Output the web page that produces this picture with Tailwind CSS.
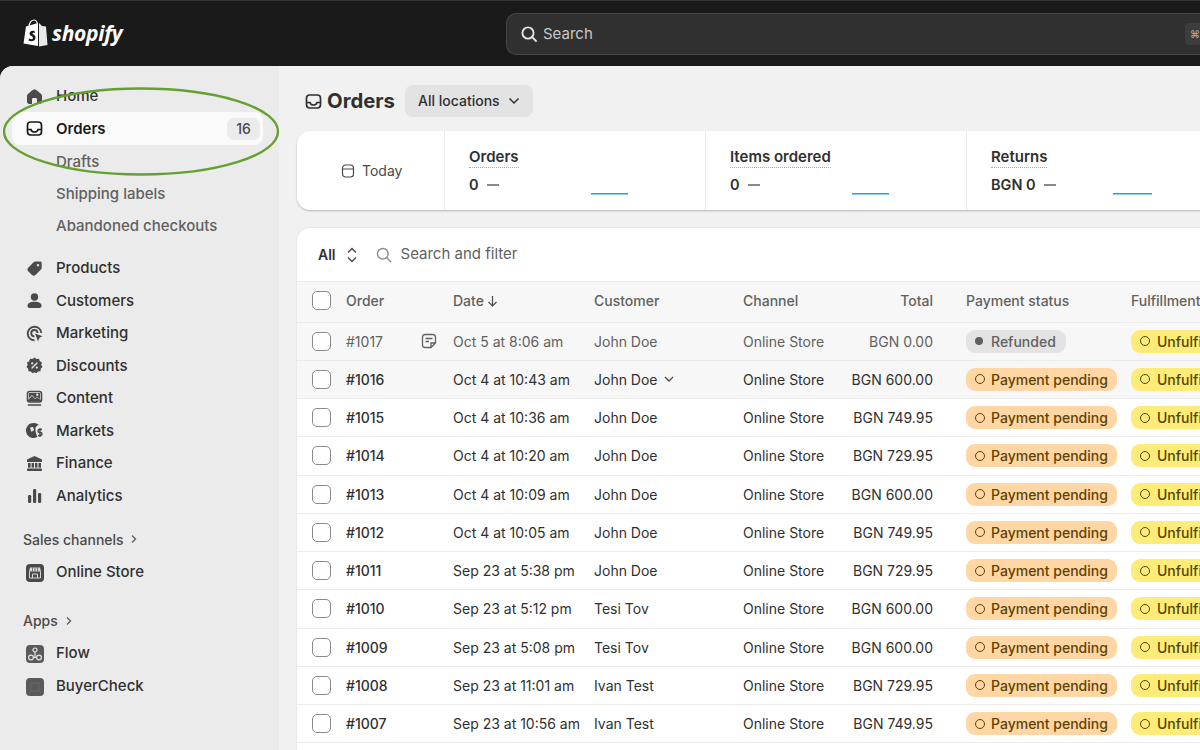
<!DOCTYPE html>
<html><head><meta charset="utf-8">
<script src="https://cdn.jsdelivr.net/npm/@tailwindcss/browser@4"></script>
</head>
<body class="m-0 w-[1200px] h-[750px] overflow-hidden bg-[#1a1a1a] font-['Inter','Liberation_Sans',sans-serif] text-[#303030]">
<header class="h-[66px] flex items-center relative border-t border-[#333]">
  <div class="w-[506px] pl-[23px] flex items-center gap-[4px]">
    <svg width="25" height="29" viewBox="0 0 25 29"><path d="M3 7.5 L15 4 L15 27 L0.5 24.5 Z" fill="#fff"/><path d="M16 4 L19 7 L23 7.5 L24.5 26 L16 27.5 Z" fill="#e8e8e8"/><path d="M6 8 C6 3 9 1 11 1 C13 1 14.5 3 14.5 7" fill="none" stroke="#fff" stroke-width="1.2"/><path d="M11.5 12 C9 11 6.5 12.5 6.5 14.5 C6.5 17 10 17 10 19 C10 20.5 8 20.5 6 19.5 L5.5 21.5 C8 23 12 22.5 12.5 19 C13 16 9.5 15.5 9.5 14.5 C9.5 13.5 11 13.5 12 14 Z" fill="#1a1a1a"/></svg>
    <span class="text-white italic font-bold text-[21px] tracking-[-0.3px] font-['Open_Sans',sans-serif]">shopify</span>
  </div>
  <div class="flex-1 h-[42px] rounded-l-[10px] bg-[#303030] border border-[#454545] border-r-0 flex items-center pl-[13px] gap-[5px] text-[#c9c9c9] text-[15px] overflow-hidden">
    <svg width="18" height="18" viewBox="0 0 18 18" fill="none" stroke="#e3e3e3" stroke-width="1.9"><circle cx="8" cy="8" r="5.6"/><path d="M12.2 12.2 16 16" stroke-linecap="round"/></svg>
    <span class="pt-[2px]">Search</span>
    <div class="ml-auto w-[15px] h-[22px] bg-[#3d3d3d] rounded-l-[4px] text-[10px] text-[#b5b5b5] pl-[5px] leading-[22px] overflow-hidden">⌘</div>
  </div>
</header>
<div class="flex h-[684px] bg-[#f1f1f1] rounded-tl-[13px] overflow-hidden">
  <aside class="w-[279px] shrink-0 bg-[#ebebeb] text-[15px] font-medium relative">
    <nav class="pt-[14px] pl-[12px] pr-[16px]">
      <div class="h-[32px] flex items-center px-[14px] gap-[13px]"><svg width="17" height="17" viewBox="0 0 17 17" fill="#4a4a4a"><path d="M8.5 1.5 C9.5 1.5 10.2 2 11 2.6 L14.5 5.5 C15.5 6.3 16 7 16 8.5 V13.5 C16 15 15 16 13.5 16 H11 V11.5 C11 10.5 10.5 10 9.5 10 H7.5 C6.5 10 6 10.5 6 11.5 V16 H3.5 C2 16 1 15 1 13.5 V8.5 C1 7 1.5 6.3 2.5 5.5 L6 2.6 C6.8 2 7.5 1.5 8.5 1.5 Z"/></svg><span class="pt-[1px]">Home</span></div>
      <div class="h-[33px] flex items-center px-[14px] gap-[13px] bg-[#fafafa] rounded-[8px] font-semibold text-[#1a1a1a]"><svg width="17" height="17" viewBox="0 0 17 17" fill="none" stroke="#1a1a1a" stroke-width="1.7"><rect x="1.5" y="2" width="14" height="13" rx="3.2"/><path d="M1.5 9.5 H5 C5.5 11.5 7 12 8.5 12 C10 12 11.5 11.5 12 9.5 H15.5"/></svg><span class="pt-[1px]">Orders</span><span class="ml-auto -mr-[11px] w-[33px] h-[22px] rounded-[7px] bg-[#ebebeb] text-center leading-[22px] font-medium text-[14px] text-[#4a4a4a]">16</span></div>
      <div class="h-[33px] flex items-center pl-[44px] text-[#616161]"><span class="pt-[1px]">Drafts</span></div>
      <div class="h-[32px] flex items-center pl-[44px] text-[#616161]">Shipping labels</div>
      <div class="h-[33px] flex items-center pl-[44px] text-[#616161]">Abandoned checkouts</div>
      <div class="h-[9px]"></div>
      <div class="h-[32.5px] flex items-center px-[14px] gap-[13px]"><svg width="17" height="17" viewBox="0 0 17 17" fill="#4a4a4a"><path fill-rule="evenodd" d="M9.5 1.5 H14 C15 1.5 15.7 2.2 15.7 3.2 V7.7 C15.7 8.5 15.4 9.1 14.9 9.6 L9.5 15 C8.5 16 7 16 6 15 L2.2 11.2 C1.2 10.2 1.2 8.7 2.2 7.7 L7.6 2.3 C8.1 1.8 8.7 1.5 9.5 1.5 Z M12 4 a1.2 1.2 0 1 0 .01 0 Z"/></svg><span>Products</span></div>
      <div class="h-[32.5px] flex items-center px-[14px] gap-[13px]"><svg width="17" height="17" viewBox="0 0 17 17" fill="#4a4a4a"><circle cx="8.5" cy="5" r="3.7"/><path d="M1.5 14 C1.5 11 4.5 9.7 8.5 9.7 C12.5 9.7 15.5 11 15.5 14 C15.5 15.3 14.7 16 13.5 16 H3.5 C2.3 16 1.5 15.3 1.5 14 Z"/></svg><span>Customers</span></div>
      <div class="h-[32.5px] flex items-center px-[14px] gap-[13px]"><svg width="17" height="17" viewBox="0 0 17 17" fill="none" stroke="#4a4a4a" stroke-width="1.9"><path d="M8.5 15.3 A6.8 6.8 0 1 1 15.3 8"/><path d="M8.5 11.4 A3.2 3.2 0 1 1 11.6 8"/><path d="M9 8.5 L16.5 11.2 L13.5 12.8 L12 16.3 Z" fill="#4a4a4a" stroke="none"/></svg><span>Marketing</span></div>
      <div class="h-[32.5px] flex items-center px-[14px] gap-[13px]"><svg width="17" height="17" viewBox="0 0 17 17"><path d="M8.5 0.5 L10.5 2 L13 1.8 L13.8 4.2 L16 5.5 L15.2 8 L16.5 10 L14.7 11.8 L14.5 14.3 L12 14.5 L10.3 16.3 L8.5 15.3 L6.5 16.3 L4.8 14.5 L2.5 14.3 L2.2 11.8 L0.5 10 L1.7 8 L1 5.5 L3.2 4.2 L4 1.8 L6.5 2 Z" fill="#4a4a4a"/><path d="M6 11 L11 6" stroke="#ebebeb" stroke-width="1.4" stroke-linecap="round"/><circle cx="6.2" cy="6.4" r="1.1" fill="#ebebeb"/><circle cx="10.8" cy="10.6" r="1.1" fill="#ebebeb"/></svg><span>Discounts</span></div>
      <div class="h-[32.5px] flex items-center px-[14px] gap-[13px]"><svg width="17" height="17" viewBox="0 0 17 17"><rect x="1.5" y="1.5" width="14" height="10.5" rx="2.2" fill="none" stroke="#4a4a4a" stroke-width="1.6"/><path d="M2 10 L6 6 L9 9 L11 7.5 L15 10 V11.5 H2 Z" fill="#4a4a4a"/><path d="M3 3 H14 V9 L11 7 L9 8.5 L6 5 L3 8 Z" fill="#4a4a4a"/><circle cx="11.3" cy="4.8" r="1.2" fill="#ebebeb"/><path d="M2.5 15 H14.5" stroke="#4a4a4a" stroke-width="1.7" stroke-linecap="round"/></svg><span>Content</span></div>
      <div class="h-[32.5px] flex items-center px-[14px] gap-[13px]"><svg width="17" height="17" viewBox="0 0 17 17"><path d="M8 1 A7.5 7.5 0 0 1 13 3 C10 3.5 9 6 9.5 8.5 C9.8 11 10.5 13.5 11.5 14.8 A7.5 7.5 0 1 1 8 1 Z" fill="#4a4a4a"/><path d="M4 5.5 L7 5 L8 8 L5.5 10 Z" fill="#ebebeb"/><path d="M16 7.5 H13.5 C11.5 7.5 11.5 10.5 13.5 10.5 H14.5 C16.5 10.5 16.5 13.5 14.5 13.5 H12 M14 6 V15" fill="none" stroke="#4a4a4a" stroke-width="1.4"/></svg><span>Markets</span></div>
      <div class="h-[32.5px] flex items-center px-[14px] gap-[13px]"><svg width="17" height="17" viewBox="0 0 17 17" fill="#4a4a4a"><path d="M8.5 1 L16 4.5 V7 H1 V4.5 Z"/><rect x="2" y="8" width="2.6" height="4.6"/><rect x="5.6" y="8" width="2.4" height="4.6"/><rect x="9" y="8" width="2.4" height="4.6"/><rect x="12.4" y="8" width="2.6" height="4.6"/><rect x="1" y="13.5" width="15" height="2.5" rx=".8"/></svg><span>Finance</span></div>
      <div class="h-[32.5px] flex items-center px-[14px] gap-[13px]"><svg width="17" height="17" viewBox="0 0 17 17" fill="#4a4a4a"><rect x="2" y="8" width="3.2" height="8" rx="1.2"/><rect x="7" y="2" width="3.2" height="14" rx="1.2"/><rect x="12" y="6" width="3.2" height="10" rx="1.2"/></svg><span>Analytics</span></div>
      <div class="h-[11px]"></div>
      <div class="h-[33.5px] pb-[1px] flex items-center pl-[11px] gap-[6px] text-[14px] text-[#4a4a4a]"><span>Sales channels</span><svg width="8" height="10" viewBox="0 0 8 10" fill="none" stroke="#616161" stroke-width="1.4"><path d="M2 1.5 L5.5 5 L2 8.5"/></svg></div>
      <div class="h-[32px] flex items-center px-[14px] gap-[12px]"><svg width="18" height="18" viewBox="0 0 18 18"><rect width="18" height="18" rx="4" fill="#4a4a4a"/><path d="M3.5 7.5 V14 H14.5 V7.5" fill="none" stroke="#d8d8d8" stroke-width="1"/><path d="M4 3.5 H14 L15 7.5 H3 Z" fill="#d8d8d8"/><path d="M6.5 3.5 V7.5 M9 3.5 V7.5 M11.5 3.5 V7.5" stroke="#4a4a4a" stroke-width=".7"/><path d="M6.5 14 V10 H11.5 V14" fill="none" stroke="#d8d8d8" stroke-width="1"/></svg><span>Online Store</span></div>
      <div class="h-[15.5px]"></div>
      <div class="h-[33px] flex items-center pl-[11px] gap-[7px] text-[14px] text-[#4a4a4a]"><span>Apps</span><svg width="8" height="10" viewBox="0 0 8 10" fill="none" stroke="#616161" stroke-width="1.4"><path d="M2 1.5 L5.5 5 L2 8.5"/></svg></div>
      <div class="h-[33px] flex items-center px-[14px] gap-[12px]"><svg width="18" height="18" viewBox="0 0 18 18"><rect width="18" height="18" rx="4" fill="#5a5a5a"/><g fill="none" stroke="#e5e5e5" stroke-width="1.2"><circle cx="9" cy="5" r="2"/><circle cx="5" cy="12.5" r="2.4"/><circle cx="13" cy="12.5" r="2.4"/><path d="M9 7 V12.5 M7.4 12.5 H10.6"/></g></svg><span>Flow</span></div>
      <div class="h-[33px] flex items-center px-[14px] gap-[12px]"><svg width="18" height="18" viewBox="0 0 18 18"><rect width="18" height="18" rx="4" fill="#5a5a5a"/><rect x="5" y="5" width="8" height="8" fill="none" stroke="#666" stroke-width="1"/></svg><span>BuyerCheck</span></div>
    </nav>
    <svg class="absolute left-[3px] top-[21px] pointer-events-none" width="277" height="90" viewBox="0 0 277 90" fill="none"><ellipse cx="138" cy="44.5" rx="137" ry="43" stroke="#64a032" stroke-width="2.4"/></svg>
  </aside>
  <main class="flex-1 min-w-0 pl-[18px] overflow-hidden">
    <div class="h-[65px] flex items-center pl-[8px] pt-[5px]">
      <svg width="17" height="17" viewBox="0 0 17 17" fill="none" stroke="#303030" stroke-width="1.7"><rect x="1.5" y="2" width="14" height="13" rx="3.2"/><path d="M1.5 9.5 H5 C5.5 11.5 7 12 8.5 12 C10 12 11.5 11.5 12 9.5 H15.5"/></svg>
      <h1 class="ml-[5px] text-[20.3px] font-bold">Orders</h1>
      <button class="ml-[10px] h-[32px] w-[128px] flex items-center justify-center gap-[8px] bg-[#e3e3e3] rounded-[8px] text-[14px] font-medium"><span class="pb-[2px]">All locations</span> <svg width="12" height="8" viewBox="0 0 12 8" fill="none" stroke="#303030" stroke-width="1.5"><path d="M1.5 1.5 L6 6 L10.5 1.5"/></svg></button>
    </div>
    <section class="h-[79px] w-[940px] bg-white rounded-l-[13px] flex shadow-[0_1px_2px_rgba(0,0,0,0.25)]">
      <div class="w-[148px] flex items-center pl-[44px] gap-[7px] border-r border-[#ebebeb] text-[14px] text-[#4a4a4a]"><svg width="14" height="14" viewBox="0 0 14 14" fill="none" stroke="#4a4a4a" stroke-width="1.2"><rect x="1.5" y="1" width="11" height="12" rx="3"/><path d="M1.5 5 H12.5"/></svg>Today</div>
      <div class="w-[261px] border-r border-[#ebebeb] pl-[24px] relative">
        <div class="mt-[16px] w-fit text-[15px] font-semibold leading-[20px] border-b border-dotted border-[#aaa]">Orders</div>
        <div class="mt-[7px] flex items-center gap-[8px] text-[14.5px] font-semibold leading-[20px]">0 <span class="w-[12px] h-[1.5px] bg-[#8a8a8a]"></span></div>
        <svg class="absolute left-[146px] top-[62px]" width="37" height="2"><rect width="37" height="1.5" fill="#1ba1f2"/></svg>
      </div>
      <div class="w-[261px] border-r border-[#ebebeb] pl-[24px] relative">
        <div class="mt-[16px] w-fit text-[15px] font-semibold leading-[20px] border-b border-dotted border-[#aaa]">Items ordered</div>
        <div class="mt-[7px] flex items-center gap-[8px] text-[14.5px] font-semibold leading-[20px]">0 <span class="w-[12px] h-[1.5px] bg-[#8a8a8a]"></span></div>
        <svg class="absolute left-[146px] top-[62px]" width="37" height="2"><rect width="37" height="1.5" fill="#1ba1f2"/></svg>
      </div>
      <div class="flex-1 pl-[24px] relative">
        <div class="mt-[16px] w-fit text-[15px] font-semibold leading-[20px] border-b border-dotted border-[#aaa]">Returns</div>
        <div class="mt-[7px] flex items-center gap-[8px] text-[14.5px] font-semibold leading-[20px]">BGN 0 <span class="w-[12px] h-[1.5px] bg-[#8a8a8a]"></span></div>
        <svg class="absolute left-[146px] top-[62px]" width="39" height="2"><rect width="39" height="1.5" fill="#1ba1f2"/></svg>
      </div>
    </section>
    <section class="mt-[18px] w-[940px] pb-[20px] bg-white rounded-tl-[13px] shadow-[0_0_2px_rgba(0,0,0,0.12)]">
      <div class="h-[53px] flex items-center pl-[21px] text-[14px]">
        <span class="font-semibold">All</span>
        <svg class="ml-[10px]" width="12" height="16" viewBox="0 0 12 16" fill="none" stroke="#4a4a4a" stroke-width="1.5"><path d="M2 5.5 L6 1.5 L10 5.5 M2 10.5 L6 14.5 L10 10.5"/></svg>
        <svg class="ml-[18px]" width="16" height="16" viewBox="0 0 16 16" fill="none" stroke="#8a8a8a" stroke-width="1.4"><circle cx="6.8" cy="6.8" r="5.3"/><path d="M10.8 10.8 L15 15"/></svg>
        <span class="ml-[9px] text-[15px] text-[#616161]">Search and filter</span>
      </div>
      <div class="h-[41.5px] pb-[2px] grid grid-cols-[49px_107px_141px_149px_106px_84px_1fr] items-center bg-[#f7f7f7] border-y border-[#ebebeb] text-[14px] font-medium text-[#616161] whitespace-nowrap">
        <span class="pl-[15px]"><span class="block w-[19px] h-[19px] bg-white border border-[#8a8a8a] rounded-[5px]"></span></span>
        <span>Order</span>
        <span class="flex items-center gap-[3px]">Date <svg width="11" height="12" viewBox="0 0 11 12" fill="none" stroke="#4a4a4a" stroke-width="1.2"><path d="M5.5 1 V11 M1.5 7 L5.5 11 L9.5 7"/></svg></span>
        <span>Customer</span>
        <span>Channel</span>
        <span class="text-right">Total</span>
        <span class="grid grid-cols-[165px_1fr] pl-[33px]"><span>Payment status</span><span>Fulfillment status</span></span>
      </div>

      <div class="h-[38.25px] grid grid-cols-[49px_107px_141px_149px_106px_84px_1fr] items-center border-b border-[#ebebeb] bg-[#f7f7f7] text-[14px] text-[#616161] whitespace-nowrap">
        <span class="pl-[15px]"><span class="block w-[19px] h-[19px] bg-white border border-[#8a8a8a] rounded-[5px]"></span></span>
        <span class="flex items-center justify-between pr-[16px]">#1017<svg width="16" height="16" viewBox="0 0 16 16" fill="none" stroke="#616161" stroke-width="1.3"><path d="M14.5 10 V4 C14.5 2.5 13.5 1.5 12 1.5 H4 C2.5 1.5 1.5 2.5 1.5 4 V12 C1.5 13.5 2.5 14.5 4 14.5 H10 Z M10 14.5 V10 H14.5 M4.5 5.5 H11.5 M4.5 8.5 H8"/></svg></span>
        <span>Oct 5 at 8:06 am</span><span>John Doe</span><span>Online Store</span><span class="text-right">BGN 0.00</span>
        <span class="flex gap-[65px] pl-[33px] font-medium"><span class="w-[100px] h-[23px] shrink-0 rounded-[9px] bg-[#e3e3e3] flex items-center pl-[9px] gap-[8px] text-[#616161]"><span class="w-[8px] h-[8px] rounded-full bg-[#616161]"></span>Refunded</span><span class="h-[23px] rounded-l-[9px] bg-[#ffeb78] flex items-center pl-[9px] gap-[7px] text-[#4f4700] w-[100px]"><span class="w-[10px] h-[10px] rounded-full border-[1.5px] border-[#4f4700]"></span>Unfulfilled</span></span>
      </div>
      <div class="h-[38.25px] grid grid-cols-[49px_107px_141px_149px_106px_84px_1fr] items-center border-b border-[#ebebeb] bg-[#f7f7f7] text-[14px] whitespace-nowrap">
        <span class="pl-[15px]"><span class="block w-[19px] h-[19px] bg-white border border-[#8a8a8a] rounded-[5px]"></span></span>
        <span class="font-medium">#1016</span>
        <span>Oct 4 at 10:43 am</span><span class="flex items-center gap-[6px]">John Doe <svg width="10" height="7" viewBox="0 0 10 7" fill="none" stroke="#4a4a4a" stroke-width="1.3"><path d="M1 1 L5 5 L9 1"/></svg></span><span>Online Store</span><span class="text-right">BGN 600.00</span>
        <span class="flex gap-[14px] pl-[33px] font-medium"><span class="w-[151px] h-[23px] shrink-0 rounded-[9px] bg-[#ffd6a4] flex items-center pl-[9px] gap-[6px] text-[#5e4200]"><span class="w-[10px] h-[10px] rounded-full border-[1.5px] border-[#5e4200]"></span>Payment pending</span><span class="h-[23px] rounded-l-[9px] bg-[#ffeb78] flex items-center pl-[9px] gap-[7px] text-[#4f4700] w-[100px]"><span class="w-[10px] h-[10px] rounded-full border-[1.5px] border-[#4f4700]"></span>Unfulfilled</span></span>
      </div>
      <div class="h-[38.25px] grid grid-cols-[49px_107px_141px_149px_106px_84px_1fr] items-center border-b border-[#ebebeb] text-[14px] whitespace-nowrap"><span class="pl-[15px]"><span class="block w-[19px] h-[19px] bg-white border border-[#8a8a8a] rounded-[5px]"></span></span><span class="font-medium">#1015</span><span>Oct 4 at 10:36 am</span><span>John Doe</span><span>Online Store</span><span class="text-right">BGN 749.95</span><span class="flex gap-[14px] pl-[33px] font-medium"><span class="w-[151px] h-[23px] shrink-0 rounded-[9px] bg-[#ffd6a4] flex items-center pl-[9px] gap-[6px] text-[#5e4200]"><span class="w-[10px] h-[10px] rounded-full border-[1.5px] border-[#5e4200]"></span>Payment pending</span><span class="h-[23px] rounded-l-[9px] bg-[#ffeb78] flex items-center pl-[9px] gap-[7px] text-[#4f4700] w-[100px]"><span class="w-[10px] h-[10px] rounded-full border-[1.5px] border-[#4f4700]"></span>Unfulfilled</span></span></div>
      <div class="h-[38.25px] grid grid-cols-[49px_107px_141px_149px_106px_84px_1fr] items-center border-b border-[#ebebeb] text-[14px] whitespace-nowrap"><span class="pl-[15px]"><span class="block w-[19px] h-[19px] bg-white border border-[#8a8a8a] rounded-[5px]"></span></span><span class="font-medium">#1014</span><span>Oct 4 at 10:20 am</span><span>John Doe</span><span>Online Store</span><span class="text-right">BGN 729.95</span><span class="flex gap-[14px] pl-[33px] font-medium"><span class="w-[151px] h-[23px] shrink-0 rounded-[9px] bg-[#ffd6a4] flex items-center pl-[9px] gap-[6px] text-[#5e4200]"><span class="w-[10px] h-[10px] rounded-full border-[1.5px] border-[#5e4200]"></span>Payment pending</span><span class="h-[23px] rounded-l-[9px] bg-[#ffeb78] flex items-center pl-[9px] gap-[7px] text-[#4f4700] w-[100px]"><span class="w-[10px] h-[10px] rounded-full border-[1.5px] border-[#4f4700]"></span>Unfulfilled</span></span></div>
      <div class="h-[38.25px] grid grid-cols-[49px_107px_141px_149px_106px_84px_1fr] items-center border-b border-[#ebebeb] text-[14px] whitespace-nowrap"><span class="pl-[15px]"><span class="block w-[19px] h-[19px] bg-white border border-[#8a8a8a] rounded-[5px]"></span></span><span class="font-medium">#1013</span><span>Oct 4 at 10:09 am</span><span>John Doe</span><span>Online Store</span><span class="text-right">BGN 600.00</span><span class="flex gap-[14px] pl-[33px] font-medium"><span class="w-[151px] h-[23px] shrink-0 rounded-[9px] bg-[#ffd6a4] flex items-center pl-[9px] gap-[6px] text-[#5e4200]"><span class="w-[10px] h-[10px] rounded-full border-[1.5px] border-[#5e4200]"></span>Payment pending</span><span class="h-[23px] rounded-l-[9px] bg-[#ffeb78] flex items-center pl-[9px] gap-[7px] text-[#4f4700] w-[100px]"><span class="w-[10px] h-[10px] rounded-full border-[1.5px] border-[#4f4700]"></span>Unfulfilled</span></span></div>
      <div class="h-[38.25px] grid grid-cols-[49px_107px_141px_149px_106px_84px_1fr] items-center border-b border-[#ebebeb] text-[14px] whitespace-nowrap"><span class="pl-[15px]"><span class="block w-[19px] h-[19px] bg-white border border-[#8a8a8a] rounded-[5px]"></span></span><span class="font-medium">#1012</span><span>Oct 4 at 10:05 am</span><span>John Doe</span><span>Online Store</span><span class="text-right">BGN 749.95</span><span class="flex gap-[14px] pl-[33px] font-medium"><span class="w-[151px] h-[23px] shrink-0 rounded-[9px] bg-[#ffd6a4] flex items-center pl-[9px] gap-[6px] text-[#5e4200]"><span class="w-[10px] h-[10px] rounded-full border-[1.5px] border-[#5e4200]"></span>Payment pending</span><span class="h-[23px] rounded-l-[9px] bg-[#ffeb78] flex items-center pl-[9px] gap-[7px] text-[#4f4700] w-[100px]"><span class="w-[10px] h-[10px] rounded-full border-[1.5px] border-[#4f4700]"></span>Unfulfilled</span></span></div>
      <div class="h-[38.25px] grid grid-cols-[49px_107px_141px_149px_106px_84px_1fr] items-center border-b border-[#ebebeb] text-[14px] whitespace-nowrap"><span class="pl-[15px]"><span class="block w-[19px] h-[19px] bg-white border border-[#8a8a8a] rounded-[5px]"></span></span><span class="font-medium">#1011</span><span>Sep 23 at 5:38 pm</span><span>John Doe</span><span>Online Store</span><span class="text-right">BGN 729.95</span><span class="flex gap-[14px] pl-[33px] font-medium"><span class="w-[151px] h-[23px] shrink-0 rounded-[9px] bg-[#ffd6a4] flex items-center pl-[9px] gap-[6px] text-[#5e4200]"><span class="w-[10px] h-[10px] rounded-full border-[1.5px] border-[#5e4200]"></span>Payment pending</span><span class="h-[23px] rounded-l-[9px] bg-[#ffeb78] flex items-center pl-[9px] gap-[7px] text-[#4f4700] w-[100px]"><span class="w-[10px] h-[10px] rounded-full border-[1.5px] border-[#4f4700]"></span>Unfulfilled</span></span></div>
      <div class="h-[38.25px] grid grid-cols-[49px_107px_141px_149px_106px_84px_1fr] items-center border-b border-[#ebebeb] text-[14px] whitespace-nowrap"><span class="pl-[15px]"><span class="block w-[19px] h-[19px] bg-white border border-[#8a8a8a] rounded-[5px]"></span></span><span class="font-medium">#1010</span><span>Sep 23 at 5:12 pm</span><span>Tesi Tov</span><span>Online Store</span><span class="text-right">BGN 600.00</span><span class="flex gap-[14px] pl-[33px] font-medium"><span class="w-[151px] h-[23px] shrink-0 rounded-[9px] bg-[#ffd6a4] flex items-center pl-[9px] gap-[6px] text-[#5e4200]"><span class="w-[10px] h-[10px] rounded-full border-[1.5px] border-[#5e4200]"></span>Payment pending</span><span class="h-[23px] rounded-l-[9px] bg-[#ffeb78] flex items-center pl-[9px] gap-[7px] text-[#4f4700] w-[100px]"><span class="w-[10px] h-[10px] rounded-full border-[1.5px] border-[#4f4700]"></span>Unfulfilled</span></span></div>
      <div class="h-[38.25px] grid grid-cols-[49px_107px_141px_149px_106px_84px_1fr] items-center border-b border-[#ebebeb] text-[14px] whitespace-nowrap"><span class="pl-[15px]"><span class="block w-[19px] h-[19px] bg-white border border-[#8a8a8a] rounded-[5px]"></span></span><span class="font-medium">#1009</span><span>Sep 23 at 5:08 pm</span><span>Tesi Tov</span><span>Online Store</span><span class="text-right">BGN 600.00</span><span class="flex gap-[14px] pl-[33px] font-medium"><span class="w-[151px] h-[23px] shrink-0 rounded-[9px] bg-[#ffd6a4] flex items-center pl-[9px] gap-[6px] text-[#5e4200]"><span class="w-[10px] h-[10px] rounded-full border-[1.5px] border-[#5e4200]"></span>Payment pending</span><span class="h-[23px] rounded-l-[9px] bg-[#ffeb78] flex items-center pl-[9px] gap-[7px] text-[#4f4700] w-[100px]"><span class="w-[10px] h-[10px] rounded-full border-[1.5px] border-[#4f4700]"></span>Unfulfilled</span></span></div>
      <div class="h-[38.25px] grid grid-cols-[49px_107px_141px_149px_106px_84px_1fr] items-center border-b border-[#ebebeb] text-[14px] whitespace-nowrap"><span class="pl-[15px]"><span class="block w-[19px] h-[19px] bg-white border border-[#8a8a8a] rounded-[5px]"></span></span><span class="font-medium">#1008</span><span>Sep 23 at 11:01 am</span><span>Ivan Test</span><span>Online Store</span><span class="text-right">BGN 729.95</span><span class="flex gap-[14px] pl-[33px] font-medium"><span class="w-[151px] h-[23px] shrink-0 rounded-[9px] bg-[#ffd6a4] flex items-center pl-[9px] gap-[6px] text-[#5e4200]"><span class="w-[10px] h-[10px] rounded-full border-[1.5px] border-[#5e4200]"></span>Payment pending</span><span class="h-[23px] rounded-l-[9px] bg-[#ffeb78] flex items-center pl-[9px] gap-[7px] text-[#4f4700] w-[100px]"><span class="w-[10px] h-[10px] rounded-full border-[1.5px] border-[#4f4700]"></span>Unfulfilled</span></span></div>
      <div class="h-[38.25px] grid grid-cols-[49px_107px_141px_149px_106px_84px_1fr] items-center border-b border-[#ebebeb] text-[14px] whitespace-nowrap"><span class="pl-[15px]"><span class="block w-[19px] h-[19px] bg-white border border-[#8a8a8a] rounded-[5px]"></span></span><span class="font-medium">#1007</span><span>Sep 23 at 10:56 am</span><span>Ivan Test</span><span>Online Store</span><span class="text-right">BGN 749.95</span><span class="flex gap-[14px] pl-[33px] font-medium"><span class="w-[151px] h-[23px] shrink-0 rounded-[9px] bg-[#ffd6a4] flex items-center pl-[9px] gap-[6px] text-[#5e4200]"><span class="w-[10px] h-[10px] rounded-full border-[1.5px] border-[#5e4200]"></span>Payment pending</span><span class="h-[23px] rounded-l-[9px] bg-[#ffeb78] flex items-center pl-[9px] gap-[7px] text-[#4f4700] w-[100px]"><span class="w-[10px] h-[10px] rounded-full border-[1.5px] border-[#4f4700]"></span>Unfulfilled</span></span></div>
    </section>
  </main>
</div>
</body></html>
